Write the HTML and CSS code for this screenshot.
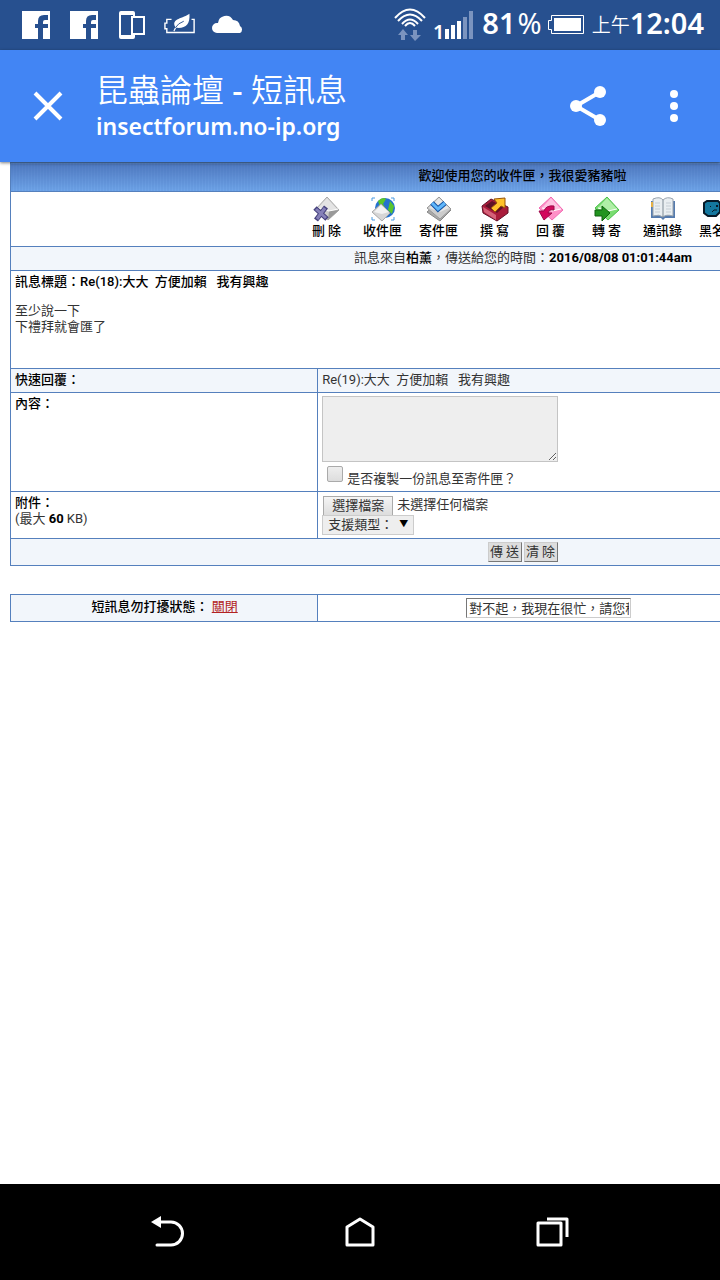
FILE: index.html
```html
<!DOCTYPE html>
<html lang="zh-Hant">
<head>
    <meta charset="UTF-8">
    <meta name="viewport" content="width=device-width, initial-scale=1.0">
    <title>昆蟲論壇 - 短訊息</title>
    <link rel="stylesheet" href="styles.css">
</head>
<body>
    <!-- Status bar -->
    <div class="status-bar">
        <div class="status-left">
            <svg width="32" height="32" viewBox="0 0 32 32"><path fill="#fff" d="M2 2h28v28h-7V19h5v-4h-5v-2q0-2 2-2h3V6h-4q-6 0-6 6v3h-3v4h3v11H2z"/></svg>
            <svg width="32" height="32" viewBox="0 0 32 32"><path fill="#fff" d="M2 2h28v28h-7V19h5v-4h-5v-2q0-2 2-2h3V6h-4q-6 0-6 6v3h-3v4h3v11H2z"/></svg>
            <svg width="32" height="32" viewBox="0 0 32 32"><path fill="#fff" fill-rule="evenodd" d="M5 2h12q2 0 2 2v3h-2V6H5v20h12v-1h2v3q0 2-2 2H5q-2 0-2-2V4q0-2 2-2z"/><path fill="none" stroke="#fff" stroke-width="2" d="M16 8h12v17H16z"/></svg>
            <svg width="34" height="32" viewBox="0 0 34 32"><path fill="none" stroke="#fff" stroke-width="1.500" d="M9 10H3v4H1v6h2v4h29V10h-3"/><path fill="#27508f" d="M8 8h21v5l-7 9H8z"/><path fill="#fff" d="M27 4c1 11-4 16-14 15l-2 4-1-1 2-4c-5-9 9-9 15-14z"/><path fill="none" stroke="#27508f" d="M12 19q3-5 9-7"/></svg>
            <svg width="32" height="32" viewBox="0 0 32 32"><path fill="#fff" d="M5 24a5 5 0 0 1 0-10h1a8 8 0 0 1 15-3q6 0 7 6a4 4 0 0 1 0 7z"/></svg>
        </div>
        <div class="status-right">
            <svg width="32" height="36" viewBox="0 0 32 36"><g fill="none" stroke="#fff" stroke-width="2"><path d="M1 11q15-17 30 0M4 14q12-13 24 0M8 17q8-9 16 0M11 19q5-6 10 0"/></g><path fill="#7b94bf" d="M9 22l5 6h-3v5H7v-5H4zM19 23h4v5h4l-6 6-5-6h3z"/></svg>
            <svg class="signal" width="40" height="36" viewBox="0 0 40 36"><text x="-1" y="32" class="signal-text">1</text><path fill="#fff" d="M11 22h4v10h-4zM17 18h4v14h-4zM23 14h4v18h-4z"/><path fill="#7b94bf" d="M29 10h4v22h-4zM35 4h4v28h-4z"/></svg>
            <span class="status-number">81<span class="light">%</span></span>
            <svg class="battery" width="36" height="20" viewBox="0 0 36 20"><path fill="none" stroke="#fff" d="M3.500.5h32v18h-32v-4h-3v-9h3z"/><path fill="#fff" d="M6 3h27v13H6z"/></svg>
            <span class="ampm">上午</span><span class="status-number">12:04</span>
        </div>
    </div>

    <!-- Browser title bar -->
    <header class="app-bar">
        <button type="button" class="icon-button close" aria-label="關閉分頁"><svg width="32" height="32" viewBox="0 0 32 32"><path fill="none" stroke="#fff" stroke-width="4" d="M3 3l26 26M29 3L3 29"/></svg></button>
        <div class="page-info">
            <h1>昆蟲論壇 <span class="dash">-</span> 短訊息</h1>
            <p>insectforum.no-ip.org</p>
        </div>
        <button type="button" class="icon-button" aria-label="分享"><svg width="40" height="44" viewBox="0 0 40 44"><path fill="none" stroke="#fff" stroke-width="4" d="M32 8L8 22l24 14"/><g fill="#fff"><circle cx="32" cy="8" r="6"/><circle cx="8" cy="22" r="6"/><circle cx="32" cy="36" r="6"/></g></svg></button>
        <button type="button" class="icon-button more" aria-label="更多"><svg width="8" height="32" viewBox="0 0 8 32"><g fill="#fff"><circle cx="4" cy="4" r="4"/><circle cx="4" cy="16" r="4"/><circle cx="4" cy="28" r="4"/></g></svg></button>
    </header>

    <!-- Forum page, wider than the phone screen -->
    <main class="forum">
        <form class="forum-page">
            <table class="box">
                <colgroup><col class="col-label"><col></colgroup>
                <tr><th colspan="2" class="box-title">歡迎使用您的收件匣，我很愛豬豬啦</th></tr>
                <tr>
                    <td colspan="2" class="tools-cell">
                        <div class="tools">
                            <a href="#"><svg width="26" height="26" viewBox="0 0 26 26"><path fill="#ccc" stroke="#aaa" d="M13 1l12 13-11 10L2 13z"/><path fill="#999" d="M14 24l11-10-10 1z"/><path fill="#e4e4e4" d="M13 2l10 11-9 2-10-3z"/><path fill="none" stroke="#fff" d="M4 12l11 3 9-2"/><path fill="none" stroke="#45407c" stroke-width="5" d="M1 12l12 11M12 11L2 24"/><path fill="none" stroke="#8580b8" stroke-width="3" d="M2 13l10 9M11 12L3 23"/></svg>刪 除</a>
                            <a href="#"><svg width="26" height="26" viewBox="0 0 26 26"><circle cx="15" cy="12" r="10" fill="#2471cf"/><path fill="#59c52b" d="M8 5q5-5 8-2l-3 5 3 5-5 1zM20 5l4 5-2 8-4-4z"/><path fill="#d6d6d6" stroke="#aaa" d="M11 8l9 9-8 8-10-9z"/><path fill="#f2f2f2" d="M11 9l8 7-7 2-8-2z"/><path fill="none" stroke="#4b9ae1" d="M2 5V2h3M21 2h3v3M2 21v3h3M21 24h3v-3"/></svg>收件匣</a>
                            <a href="#"><svg width="26" height="26" viewBox="0 0 26 26"><path fill="#aaa" stroke="#888" d="M1 16l10-9 14 7-11 11z"/><path fill="#ccc" stroke="#999" d="M13 1l12 12-11 10L1 12z"/><path fill="#e6e6e6" d="M13 2l10 10-9 4-11-4z"/><path fill="none" stroke="#1554a5" stroke-width="5" d="M6 7l6 6 7-6"/><path fill="none" stroke="#60b7fb" stroke-width="3" d="M6 7l6 6 7-6"/></svg>寄件匣</a>
                            <a href="#"><svg width="26" height="26" viewBox="0 0 26 26"><path fill="#a91c3b" stroke="#63132a" d="M0 10l9-7 17 8v6l-11 8L1 17z"/><path fill="#5f1227" d="M3 10l7-5 12 6-7 6z"/><path fill="#d56178" d="M1 11l13 8v5L2 16z"/><path fill="#ffc22b" stroke="#97530a" d="M12 3l11-1v10l-4-2-6 6-4-4 6-5z"/></svg>撰 寫</a>
                            <a href="#"><svg width="26" height="26" viewBox="0 0 26 26"><path fill="#ff90c7" stroke="#f26ab2" d="M13 1l12 13-11 10L1 12z"/><path fill="#ffc4e2" d="M13 2l10 11-9 2-10-3z"/><path fill="none" stroke="#fff" d="M4 12l10 3 9-2"/><path fill="#d3085c" stroke="#9c0848" d="M16 10q-8-1-10 5H1l5 9 8-7h-4q1-4 6-3z"/></svg>回 覆</a>
                            <a href="#"><svg width="26" height="26" viewBox="0 0 26 26"><path fill="#79dc70" stroke="#4cc04c" d="M13 1l12 13-11 10L1 12z"/><path fill="#b0efa7" d="M13 2l10 11-9 2-10-3z"/><path fill="none" stroke="#fff" d="M4 12l10 3 9-2"/><path fill="#229420" stroke="#0e610e" d="M1 14h7v-4l8 7-8 8v-5H1z"/></svg>轉 寄</a>
                            <a href="#"><svg width="26" height="26" viewBox="0 0 26 26"><path fill="#557bae" d="M1 5h24v17H15l-2 2-2-2H1z"/><path fill="#e9eef1" stroke="#99a3ad" d="M3 3q7-3 10 1 4-4 10-1v17q-7-2-10 1-4-3-10-1z"/><path stroke="#7f8b96" d="M13 4v17"/><path fill="none" stroke="#c5cdd4" d="M5 7h5M5 10h5M5 13h5M5 16h5M16 7h5M16 10h5M16 13h5M16 16h5"/><path stroke="#e5b044" stroke-width="2" d="M2 6v5"/></svg>通訊錄</a>
                            <a href="#"><svg width="26" height="26" viewBox="0 0 26 26"><path fill="#14789f" stroke="#071a28" stroke-width="2" d="M1 5h11l2 2v9l-4 4H2l-4-3V7z"/><path fill="#071a28" d="M4 10h1v1H4zM10 9h2v2h-2z"/><path fill="none" stroke="#071a28" d="M6 16l2-2h3"/></svg>黑名單</a>
                        </div>
                    </td>
                </tr>
                <tr class="shade"><td colspan="2" class="center">訊息來自<b>柏薰</b>，傳送給您的時間：<b class="time">2016/08/08 01:01:44am</b></td></tr>
                <tr>
                    <td colspan="2" class="message">
                        <b>訊息標題：Re(18):大大&nbsp; 方便加賴 &nbsp; 我有興趣</b>
                        <p>至少說一下<br>下禮拜就會匯了</p>
                    </td>
                </tr>
                <tr class="shade">
                    <td><b>快速回覆：</b></td>
                    <td>Re(19):大大&nbsp; 方便加賴 &nbsp; 我有興趣</td>
                </tr>
                <tr>
                    <td><label for="content"><b>內容：</b></label></td>
                    <td>
                        <textarea id="content" class="content-input"></textarea>
                        <div class="copy-row">
                            <input type="checkbox" id="copy">
                            <label for="copy">是否複製一份訊息至寄件匣？</label>
                        </div>
                    </td>
                </tr>
                <tr>
                    <td><b>附件：</b><br>(最大 <b class="time">60</b> KB)</td>
                    <td class="file-cell">
                        <div class="file-row">
                            <input type="file" id="attachment" class="file-input">
                            <label for="attachment" class="file-button">選擇檔案</label>
                            <span>未選擇任何檔案</span>
                        </div>
                        <div class="select-wrap">
                            <select class="type-select" aria-label="支援類型"><option>支援類型：</option></select>
                        </div>
                    </td>
                </tr>
                <tr class="shade">
                    <td colspan="2" class="submit-cell">
                        <div class="submit-row">
                            <button type="submit" class="old-button">傳 送</button>
                            <button type="reset" class="old-button">清 除</button>
                        </div>
                    </td>
                </tr>
            </table>

            <table class="box busy-box">
                <colgroup><col class="col-label"><col></colgroup>
                <tr>
                    <td class="shade center"><b>短訊息勿打擾狀態：</b> <a href="#" class="toggle">關閉</a></td>
                    <td class="busy-cell"><input type="text" class="busy-input" aria-label="忙碌訊息" value="對不起，我現在很忙，請您稍後再傳"></td>
                </tr>
            </table>
        </form>
    </main>

    <!-- Android navigation -->
    <nav class="nav-bar">
        <button type="button" class="icon-button" aria-label="返回"><svg width="36" height="32" viewBox="0 0 36 32"><path fill="#fff" d="M1 6l10-6v12z"/><path fill="none" stroke="#fff" stroke-width="3" stroke-linecap="round" d="M10 6h11a11.500 11.500 0 0 1 0 23H7"/></svg></button>
        <button type="button" class="icon-button" aria-label="主畫面"><svg width="32" height="32" viewBox="0 0 32 32"><path fill="none" stroke="#fff" stroke-width="3" stroke-linejoin="round" d="M3 11l13-8 13 8v18H3z"/></svg></button>
        <button type="button" class="icon-button" aria-label="最近使用"><svg width="34" height="32" viewBox="0 0 34 32"><g fill="none" stroke="#fff" stroke-width="3" stroke-linejoin="round"><path d="M3 7h23v22H3zM12 3h20v18"/></g></svg></button>
    </nav>
</body>
</html>
```
FILE: styles.css
```css
/* General */
* {
    margin: 0;
    padding: 0;
    box-sizing: border-box;
}
body {
    display: flex;
    flex-direction: column;
    min-height: 100vh;
    font-family: Roboto, "Noto Sans CJK TC", sans-serif;
    font-size: 13px;
    line-height: 16px;
    background-color: #fff;
    color: #333;
}
svg {
    display: block;
    flex-shrink: 0;
    overflow: visible;
}
button, input, select, textarea {
    font-family: inherit;
    font-size: 13px;
    color: #333;
}
.icon-button {
    display: flex;
    align-items: center;
    justify-content: center;
    background: none;
    border: none;
    cursor: pointer;
}

/* Status bar */
.status-bar {
    display: flex;
    align-items: center;
    justify-content: space-between;
    height: 50px;
    padding: 0 16px 0 20px;
    background-color: #27508f;
    color: #fff;
    font-family: "Noto Sans", "Noto Sans CJK TC", sans-serif;
}
.status-left, .status-right {
    display: flex;
    align-items: center;
}
.status-left {
    gap: 16px;
}
.status-left svg {
    width: 32px;
}
.signal {
    margin: 0 8px;
}
.signal-text {
    fill: #fff;
    font-size: 20px;
    font-weight: 600;
}
.status-number {
    font-size: 29px;
    line-height: 46px;
    height: 50px;
    font-weight: 600;
}
.light {
    margin-left: 2px;
    font-weight: 400;
}
.battery {
    margin: 0 8px 0 6px;
}
.ampm {
    font-size: 19px;
    line-height: 48px;
    font-weight: 350;
}

/* Browser title bar */
.app-bar {
    display: flex;
    align-items: center;
    height: 112px;
    padding-left: 32px;
    padding-right: 42px;
    background-color: #4285f4;
    color: #fff;
    position: relative;
    box-shadow: 0 1px 3px rgba(0, 0, 0, 0.5);
}
.page-info {
    flex: 1;
    padding-left: 32px;
}
.page-info h1 {
    padding-top: 4px;
    font-size: 32px;
    line-height: 36px;
    font-weight: 350;
    font-family: "Noto Sans", "Noto Sans CJK TC", sans-serif;
}
.page-info .dash {
    font-weight: 500;
}
.page-info p {
    font-size: 23px;
    line-height: 36px;
    font-weight: 600;
    font-family: "Noto Sans", sans-serif;
}
.more {
    margin-left: 62px;
}

/* Forum page */
.forum {
    flex: 1;
    overflow-x: auto;
    scrollbar-width: none;
}
.forum-page {
    min-width: 1035px;
    padding-left: 10px;
}
.box {
    width: 1025px;
    table-layout: fixed;
    border-collapse: collapse;
}
.col-label {
    width: 30%;
}
.box td, .box th {
    border: 1px solid #5580bd;
    padding: 3px 3px 4px 4px;
    vertical-align: top;
}
.box .shade, .shade td {
    background-color: #f2f6fb;
}
.box b {
    color: #000;
    font-weight: 500;
}
.box .time {
    font-weight: 700;
}
.box .center {
    text-align: center;
}
.box .box-title {
    height: 29px;
    padding: 5px 4px;
    color: #000;
    font-weight: 500;
    background: repeating-linear-gradient(90deg, rgba(40, 90, 170, 0.15) 0 1px, transparent 1px 3px), linear-gradient(#5079bf, #70a6ea);
}

/* Mail tools */
.box .tools-cell {
    height: 55px;
    padding: 4px;
}
.tools {
    display: flex;
    justify-content: center;
}
.tools a {
    display: flex;
    flex-direction: column;
    align-items: center;
    width: 56px;
    gap: 1px;
    color: #000;
    font-weight: 500;
    text-decoration: none;
    white-space: nowrap;
}

.box .message {
    height: 98px;
}
.message p {
    margin-top: 13px;
}

/* Reply form */
.content-input {
    display: block;
    width: 236px;
    height: 66px;
    background-color: #eee;
    border: 1px solid #c4c4c4;
}
.copy-row {
    display: flex;
    align-items: center;
    gap: 4px;
    padding: 4px 0 0 5px;
}
.copy-row input {
    appearance: none;
    width: 16px;
    height: 16px;
    margin-bottom: 5px;
    border: 1px solid #aaa;
    border-radius: 2px;
    background: linear-gradient(#eee, #ddd);
}
.copy-row label {
    padding-top: 5px;
}
.box .file-cell {
    padding-top: 4px;
    padding-bottom: 3px;
}
.file-row {
    display: flex;
    align-items: flex-start;
    gap: 4px;
    height: 19px;
    line-height: 18px;
    padding-left: 1px;
}
.file-input {
    position: absolute;
    width: 1px;
    height: 1px;
    opacity: 0;
}
.file-button {
    height: 20px;
    padding: 0 8px;
    border: 1px solid #aaa;
    background: linear-gradient(#f5f5f5, #ddd);
}
.select-wrap {
    display: flex;
    width: 92px;
    position: relative;
}
.select-wrap::after {
    content: "▼";
    position: absolute;
    right: 6px;
    top: 1px;
    font-size: 9px;
    color: #000;
    pointer-events: none;
}
.type-select {
    appearance: none;
    width: 100%;
    height: 20px;
    padding-left: 5px;
    padding-bottom: 2px;
    border: 1px solid #ccc;
    background-color: #eee;
}
.box .submit-cell {
    padding: 3px;
}
.submit-row {
    display: flex;
    justify-content: center;
    gap: 2px;
}
.old-button {
    width: 34px;
    height: 20px;
    line-height: 16px;
    background-color: #ddd;
    border: 1px solid;
    border-color: #ccc #777 #777 #ccc;
    white-space: nowrap;
}

/* Do-not-disturb box */
.busy-box {
    margin-top: 28px;
}
.busy-box .center {
    padding-top: 4px;
}
.toggle {
    color: #b22222;
}
.box .busy-cell {
    padding: 3px 3px 3px 148px;
}
.busy-input {
    display: block;
    width: 165px;
    height: 20px;
    padding: 0 1px 2px 2px;
    border: 1px solid;
    border-color: #777 #ccc #ccc #777;
    background-color: #fff;
}

/* Android navigation */
.nav-bar {
    display: flex;
    height: 96px;
    padding: 0 10%;
    background-color: #000;
}
.nav-bar .icon-button {
    flex: 1;
}
```
